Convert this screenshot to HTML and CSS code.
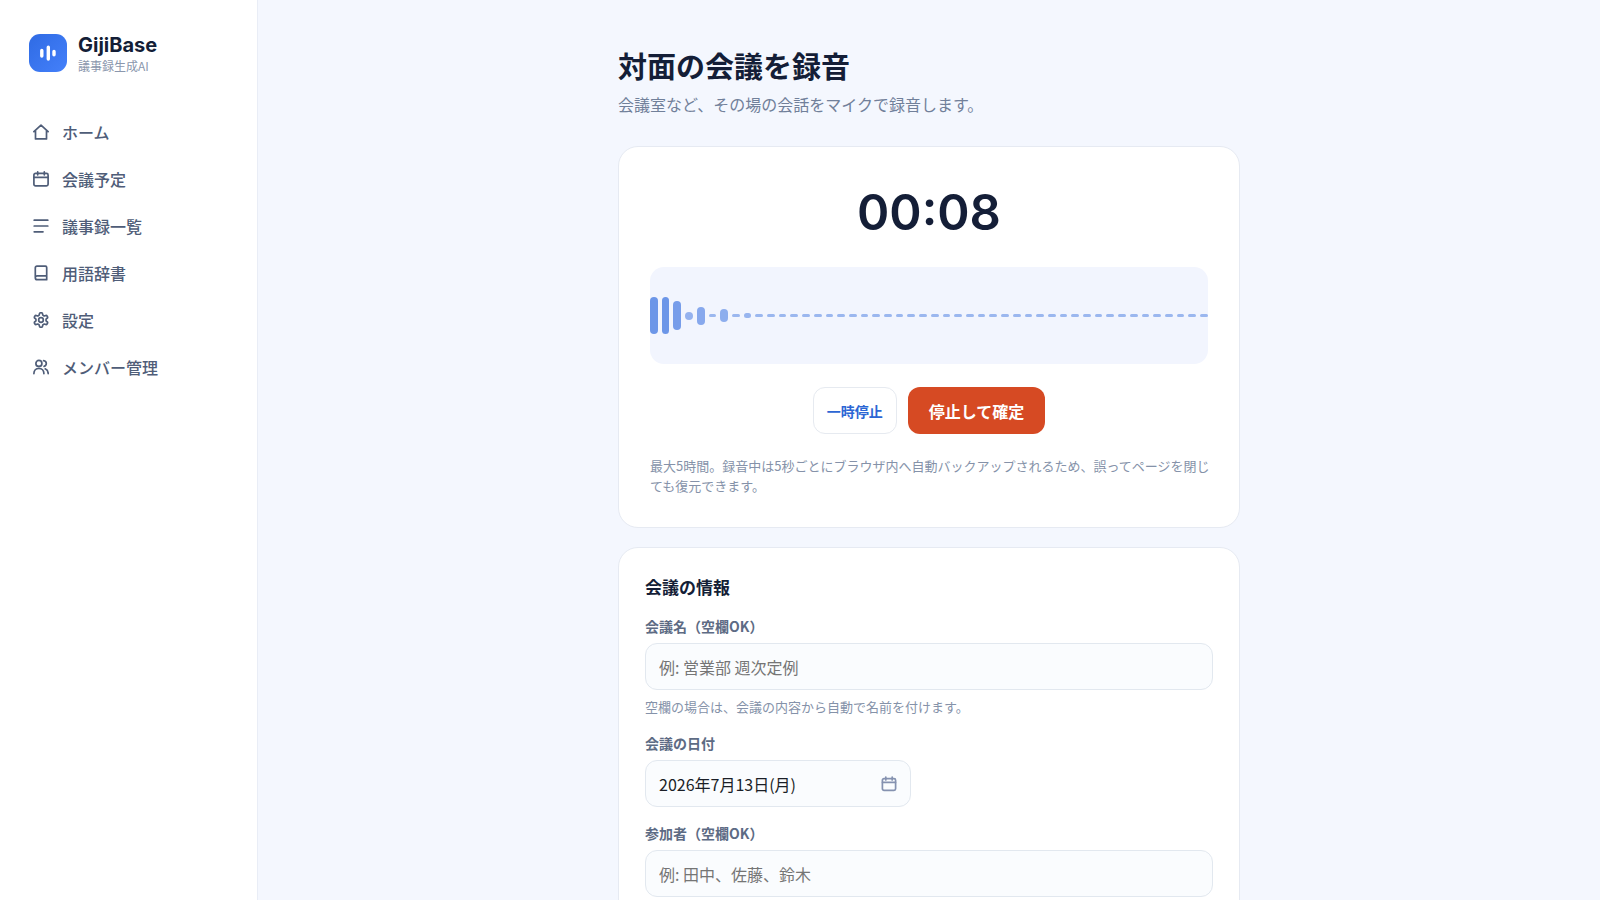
FILE: index.html
```html
<!DOCTYPE html>
<html lang="ja">
<head>
  <meta charset="UTF-8">
  <meta name="viewport" content="width=device-width, initial-scale=1.0">
  <title>対面の会議を録音 | GijiBase</title>
  <link rel="stylesheet" href="styles.css">
</head>
<body>
  <div class="layout">
    <aside class="sidebar">
      <a class="brand" href="#">
        <svg class="brand-mark" viewBox="0 0 38 38" aria-hidden="true">
          <defs>
            <linearGradient id="mark" x1="0" y1="0" x2="1" y2="1">
              <stop offset="0" stop-color="#2f6be4"/>
              <stop offset="1" stop-color="#4480fa"/>
            </linearGradient>
          </defs>
          <rect width="38" height="38" rx="11" fill="url(#mark)"/>
          <path d="M12.8 16.4v5.6M19.3 13.2v11.8M25 17.4v3.4" fill="none" stroke="#fff" stroke-width="3.4" stroke-linecap="round"/>
        </svg>
        <span class="brand-text">
          <span class="brand-name">GijiBase</span>
          <span class="brand-sub">議事録生成AI</span>
        </span>
      </a>

      <nav class="nav">
        <a class="nav-item" href="#">
          <svg class="icon" viewBox="0 0 16 16"><path d="M.9 7.6 8 1.1l7.1 6.5M2.5 6.4v8.5h11V6.4"/></svg>
          ホーム
        </a>
        <a class="nav-item" href="#">
          <svg class="icon" viewBox="0 0 16 16"><rect x=".9" y="2.3" width="14.2" height="12.6" rx="1.6"/><path d="M1 6.3h14M4.7.9v2.9M11.3.9v2.9"/></svg>
          会議予定
        </a>
        <a class="nav-item" href="#">
          <svg class="icon" viewBox="0 0 16 16"><path d="M1.2 2.2h13.6M1.2 8h13.6M1.2 13.8h8.8"/></svg>
          議事録一覧
        </a>
        <a class="nav-item" href="#">
          <svg class="icon" viewBox="0 0 16 16"><path d="M2.3 12.6V2.8c0-1 .7-1.7 1.7-1.7h8.4c.8 0 1.3.5 1.3 1.3v12.3H4.2c-1.1 0-1.9-.9-1.9-2s.8-1.9 1.9-1.9h9.5"/></svg>
          用語辞書
        </a>
        <a class="nav-item" href="#">
          <svg class="icon" viewBox="1 1 22 22"><g stroke-width="2.3"><circle cx="12" cy="12" r="3.2"/><path d="M12.22 2h-.44a2 2 0 0 0-2 2v.18a2 2 0 0 1-1 1.73l-.43.25a2 2 0 0 1-2 0l-.15-.08a2 2 0 0 0-2.73.73l-.22.38a2 2 0 0 0 .73 2.73l.15.1a2 2 0 0 1 1 1.72v.51a2 2 0 0 1-1 1.74l-.15.09a2 2 0 0 0-.73 2.73l.22.38a2 2 0 0 0 2.73.73l.15-.08a2 2 0 0 1 2 0l.43.25a2 2 0 0 1 1 1.73V20a2 2 0 0 0 2 2h.44a2 2 0 0 0 2-2v-.18a2 2 0 0 1 1-1.73l.43-.25a2 2 0 0 1 2 0l.15.08a2 2 0 0 0 2.73-.73l.22-.39a2 2 0 0 0-.73-2.73l-.15-.08a2 2 0 0 1-1-1.74v-.5a2 2 0 0 1 1-1.74l.15-.09a2 2 0 0 0 .73-2.73l-.22-.38a2 2 0 0 0-2.73-.73l-.15.08a2 2 0 0 1-2 0l-.43-.25a2 2 0 0 1-1-1.73V4a2 2 0 0 0-2-2z"/></g></svg>
          設定
        </a>
        <a class="nav-item" href="#">
          <svg class="icon" viewBox="0 0 16 16"><circle cx="5.9" cy="4.4" r="3"/><path d="M.9 14.6c0-3 2-5.2 5-5.2s5 2.2 5 5.2M10.6 1.7c1.6.2 2.7 1.3 2.7 2.8s-.9 2.5-2.2 2.9M12.2 9.8c1.9.8 3 2.5 3 4.8"/></svg>
          メンバー管理
        </a>
      </nav>
    </aside>

    <main class="main">
      <div class="content">
        <header class="page-head">
          <h1 class="page-title">対面の会議を録音</h1>
          <p class="page-lead">会議室など、その場の会話をマイクで録音します。</p>
        </header>

        <section class="card recorder">
          <div class="timer" role="timer">00:08</div>
          <div class="wave" id="wave"></div>
          <div class="actions">
            <button class="btn btn-pause" type="button">一時停止</button>
            <button class="btn btn-stop" type="button">停止して確定</button>
          </div>
          <p class="note">最大5時間。録音中は5秒ごとにブラウザ内へ自動バックアップされるため、誤ってページを閉じても復元できます。</p>
        </section>

        <section class="card">
          <form class="form">
            <h2 class="form-title">会議の情報</h2>
            <div class="field">
              <label class="label" for="title">会議名（空欄OK）</label>
              <input class="input" id="title" type="text" placeholder="例: 営業部 週次定例">
              <p class="help">空欄の場合は、会議の内容から自動で名前を付けます。</p>
            </div>
            <div class="field">
              <label class="label" for="date">会議の日付</label>
              <button class="input date-button" id="date" type="button">
                2026年7月13日(月)
                <svg class="icon date-icon" viewBox="0 0 16 16"><rect x="1.4" y="2.6" width="13.2" height="11.8" rx="1.6"/><path d="M1.5 6.4h13M4.8 1v3M11.2 1v3"/></svg>
              </button>
            </div>
            <div class="field">
              <label class="label" for="members">参加者（空欄OK）</label>
              <input class="input" id="members" type="text" placeholder="例: 田中、佐藤、鈴木">
            </div>
          </form>
        </section>
      </div>
    </main>
  </div>

  <script src="wave.js"></script>
</body>
</html>
```

FILE: styles.css
```css
* {
  box-sizing: border-box;
  margin: 0;
  padding: 0;
}

body {
  background: #f4f7fe;
  color: #141e37;
  font-family: "Noto Sans CJK JP", sans-serif;
  font-size: 16px;
}

a {
  color: inherit;
  text-decoration: none;
}

button,
input {
  font: inherit;
}

.layout {
  display: flex;
  min-height: 100vh;
}

/* sidebar */
.sidebar {
  position: sticky;
  top: 0;
  flex: none;
  width: 258px;
  height: 100vh;
  padding: 32px 16px;
  background: #fff;
  border-right: 1px solid #e9edf6;
}

.brand {
  display: flex;
  align-items: center;
  gap: 11px;
  padding: 0 13px;
}

.brand-mark {
  width: 38px;
  height: 38px;
}

.brand-text {
  display: flex;
  flex-direction: column;
}

.brand-name {
  font-family: Inter, sans-serif;
  font-size: 20px;
  font-weight: 700;
  line-height: 26px;
}

.brand-sub {
  color: #8b97ad;
  font-size: 12px;
  line-height: 16px;
}

.nav {
  display: flex;
  flex-direction: column;
  gap: 4px;
  margin-top: 36px;
}

.nav-item {
  display: flex;
  align-items: center;
  gap: 13px;
  height: 43px;
  padding: 0 17px;
  color: #4f5d78;
  font-weight: 500;
}

.icon {
  flex: none;
  width: 16px;
  height: 16px;
  fill: none;
  stroke: currentColor;
  stroke-width: 1.7;
  stroke-linecap: round;
  stroke-linejoin: round;
}

/* page */
.main {
  flex: 1;
  padding: 44px 32px;
}

.content {
  max-width: 622px;
  margin: 0 auto;
}

.page-head {
  margin-bottom: 29px;
}

.page-title {
  font-size: 29px;
  font-weight: 700;
  line-height: 42px;
}

.page-lead {
  margin-top: 5px;
  color: #71809a;
  line-height: 26px;
}

.card {
  padding: 26px;
  background: #fff;
  border: 1px solid #e6eaf2;
  border-radius: 20px;
}

.card + .card {
  margin-top: 19px;
}

/* recorder */
.recorder {
  padding: 31px;
}

.timer {
  font-family: Inter, sans-serif;
  font-size: 49px;
  font-weight: 600;
  line-height: 70px;
  text-align: center;
}

.wave {
  display: flex;
  align-items: center;
  gap: 4px;
  height: 97px;
  margin-top: 19px;
  background: #f2f5fe;
  border-radius: 14px;
}

.wave-bar {
  flex: 1;
  background: #3b72e0;
  border-radius: 4px;
}

.actions {
  display: flex;
  justify-content: center;
  gap: 11px;
  margin: 23px 0 22px;
}

.btn {
  height: 47px;
  border: 1px solid transparent;
  border-radius: 12px;
  font-weight: 700;
}

.btn-pause {
  padding: 0 13px;
  background: #fff;
  border-color: #e6eaf0;
  color: #2c66d4;
  font-size: 14px;
}

.btn-stop {
  padding: 0 20px;
  background: #d64a23;
  color: #fff;
}

.note,
.help {
  color: #8592a9;
  font-size: 13px;
  line-height: 20px;
}

.note {
  margin-right: -4px;
}

/* meeting info */
.form {
  display: flex;
  flex-direction: column;
  gap: 16px;
}

.form-title {
  font-size: 17px;
  font-weight: 700;
  line-height: 26px;
}

.label {
  display: block;
  margin-bottom: 7px;
  color: #5d6b84;
  font-size: 14px;
  font-weight: 700;
  line-height: 20px;
}

.input {
  display: block;
  width: 100%;
  height: 47px;
  padding: 0 13px;
  background: #fafcfe;
  border: 1px solid #e2e8ef;
  border-radius: 12px;
  color: #1b1f27;
}

.input::placeholder {
  color: #757575;
}

.date-button {
  display: flex;
  align-items: center;
  justify-content: space-between;
  max-width: 266px;
}

.date-icon {
  color: #8592b0;
}

.help {
  margin-top: 7px;
}
```

FILE: wave.js
```js
const BAR_COUNT = 48;
const levels = [37, 37, 29, 8, 18, 3, 13, 3, 5];
const wave = document.getElementById("wave");

for (let i = 0; i < BAR_COUNT; i++) {
  const height = levels[i] || 3;
  const bar = document.createElement("span");
  bar.className = "wave-bar";
  bar.style.height = height + "px";
  bar.style.opacity = Math.min(0.45 + height / 130, 0.75);
  wave.appendChild(bar);
}
```
